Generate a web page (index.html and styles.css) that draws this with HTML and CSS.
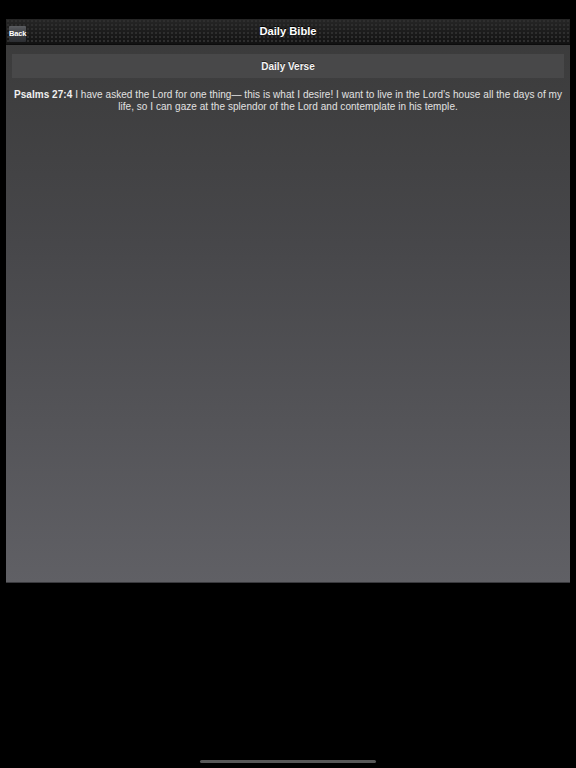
FILE: index.html
```html
<!DOCTYPE html>
<html>
<head>
<meta charset="utf-8">
<link rel="stylesheet" href="styles.css">
</head>
<body>
<div class="screen">
  <div class="app">
    <div class="navbar">
      <div class="nav-left"><span class="back">Back</span></div>
      <div class="title">Daily Bible</div>
      <div class="nav-right"></div>
    </div>
    <div class="content">
      <div class="section-head">Daily Verse</div>
      <p class="verse"><b>Psalms 27:4</b> I have asked the Lord for one thing— this is what I desire! I want to live in the Lord’s house all the days of my life, so I can gaze at the splendor of the Lord and contemplate in his temple.</p>
    </div>
  </div>
  <div class="home-row"><div class="home-indicator"></div></div>
</div>
</body>
</html>
```
FILE: styles.css
```css
html, body {
  margin: 0;
  padding: 0;
  background: #000;
}
.screen {
  width: 576px;
  height: 768px;
  padding: 19px 6px 0;
  box-sizing: border-box;
  font-family: "Liberation Sans", Arial, sans-serif;
}
.app {
  height: 564px;
  display: flex;
  flex-direction: column;
  background: linear-gradient(to bottom, #3a3a3a 0%, #47474a 40%, #606065 100%);
  border-bottom: 1px solid #3a3a3e;
  box-sizing: border-box;
}
.navbar {
  height: 26px;
  flex: none;
  display: grid;
  grid-template-columns: 1fr auto 1fr;
  align-items: center;
  padding: 0 3px;
  background-color: #161616;
  background-image:
    radial-gradient(circle at 2px 2px, #2e2e2e 0.9px, transparent 1.3px),
    linear-gradient(to bottom, #262626, #121212);
  background-size: 4px 4px, 100% 100%;
  border-bottom: 1px solid #0c0c0c;
  box-sizing: border-box;
}
.back {
  display: inline-block;
  width: 17px;
  height: 16px;
  line-height: 16px;
  font-size: 7.5px;
  font-weight: bold;
  color: #fff;
  text-align: center;
  background: linear-gradient(to bottom, #5a5c60, #3a3c40 55%, #2c2e32);
  border-radius: 1px;
  letter-spacing: -0.2px;
  white-space: nowrap;
}
.title {
  color: #fff;
  font-weight: bold;
  font-size: 11.2px;
  padding-bottom: 1px;
  text-shadow: 0 -1px 0 #000;
}
.content {
  padding: 9px 6px 0;
}
.section-head {
  height: 23px;
  padding-top: 1px;
  line-height: 23px;
  background: #484849;
  color: #f4f4f4;
  font-weight: bold;
  font-size: 10px;
  text-align: center;
  text-shadow: 0 -1px 0 #222;
}
.verse {
  margin: 11px 0 0;
  color: #e2e2e2;
  font-size: 10px;
  line-height: 12px;
  letter-spacing: 0.05px;
  text-align: center;
}
.verse b {
  color: #f0f0f0;
}
.home-row {
  display: flex;
  justify-content: center;
  margin-top: 177px;
}
.home-indicator {
  width: 176px;
  height: 3px;
  border-radius: 2px;
  background: #585858;
}
```
